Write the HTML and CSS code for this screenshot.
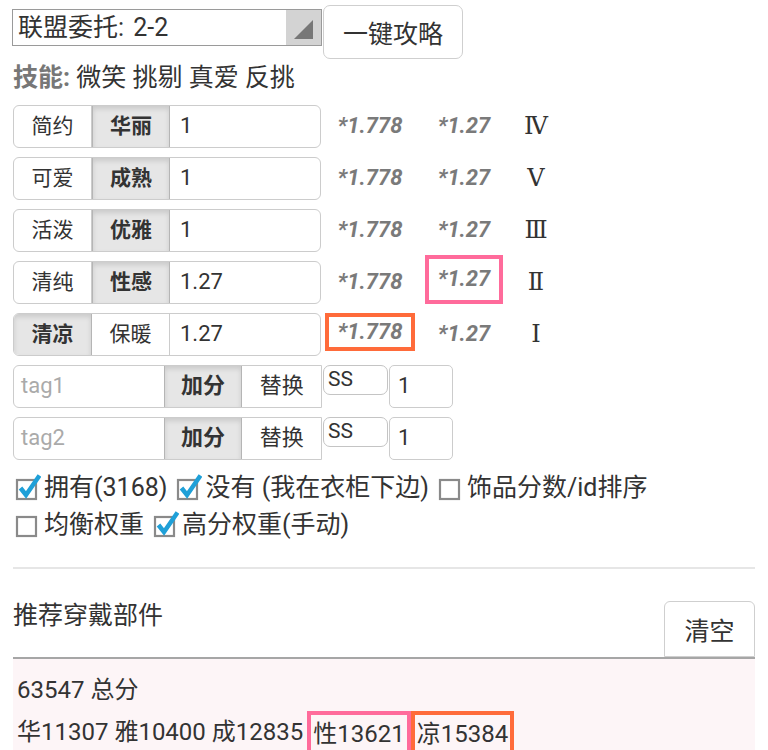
FILE: index.html
```html
<!DOCTYPE html>
<html lang="zh">
<head>
<meta charset="utf-8">
<title>联盟委托</title>
<link rel="stylesheet" href="styles.css">
</head>
<body>
<div class="page">
  <div class="top">
    <div class="select">
      <span class="select-text">联盟委托: 2-2</span>
      <span class="select-arrow"><svg width="20" height="20" viewBox="0 0 20 20"><polygon points="19,0 19,19 0,19" fill="#777"/></svg></span>
    </div>
    <button class="btn btn-big">一键攻略</button>
  </div>
  <div class="skills"><b>技能:</b> 微笑 挑剔 真爱 反挑</div>

  <div class="row">
    <div class="group"><span class="seg">简约</span><span class="seg active">华丽</span><span class="inp">1</span></div>
    <span class="mult m1">*1.778</span><span class="mult m2">*1.27</span><span class="roman">Ⅳ</span>
  </div>
  <div class="row">
    <div class="group"><span class="seg">可爱</span><span class="seg active">成熟</span><span class="inp">1</span></div>
    <span class="mult m1">*1.778</span><span class="mult m2">*1.27</span><span class="roman">Ⅴ</span>
  </div>
  <div class="row">
    <div class="group"><span class="seg">活泼</span><span class="seg active">优雅</span><span class="inp">1</span></div>
    <span class="mult m1">*1.778</span><span class="mult m2">*1.27</span><span class="roman">Ⅲ</span>
  </div>
  <div class="row">
    <div class="group"><span class="seg">清纯</span><span class="seg active">性感</span><span class="inp">1.27</span></div>
    <span class="mult m1">*1.778</span><span class="mult m2 hl-pink">*1.27</span><span class="roman">Ⅱ</span>
  </div>
  <div class="row">
    <div class="group"><span class="seg active">清凉</span><span class="seg">保暖</span><span class="inp">1.27</span></div>
    <span class="mult m1 hl-orange">*1.778</span><span class="mult m2">*1.27</span><span class="roman">Ⅰ</span>
  </div>

  <div class="row">
    <div class="tgroup"><span class="tinp">tag1</span><span class="tseg active">加分</span><span class="tseg">替换</span></div>
    <span class="ss">SS</span><span class="num">1</span>
  </div>
  <div class="row">
    <div class="tgroup"><span class="tinp">tag2</span><span class="tseg active">加分</span><span class="tseg">替换</span></div>
    <span class="ss">SS</span><span class="num">1</span>
  </div>

  <div class="checks">
    <div class="cline">
      <span class="cb"><svg width="26" height="30" viewBox="0 0 26 30"><rect x="2" y="9" width="19" height="19" fill="#fff" stroke="#8a8a8a" stroke-width="2.2"/><path d="M5.5 17 L11 24 L24.5 4.5" fill="none" stroke="#1fa0d8" stroke-width="4.5"/></svg></span><span class="ct">拥有(3168)</span>
      <span class="cb"><svg width="26" height="30" viewBox="0 0 26 30"><rect x="2" y="9" width="19" height="19" fill="#fff" stroke="#8a8a8a" stroke-width="2.2"/><path d="M5.5 17 L11 24 L24.5 4.5" fill="none" stroke="#1fa0d8" stroke-width="4.5"/></svg></span><span class="ct">没有 (我在衣柜下边)</span>
      <span class="cb"><svg width="26" height="30" viewBox="0 0 26 30"><rect x="2" y="9" width="19" height="19" fill="#fff" stroke="#8a8a8a" stroke-width="2.2"/></svg></span><span class="ct">饰品分数/id排序</span>
    </div>
    <div class="cline">
      <span class="cb"><svg width="26" height="30" viewBox="0 0 26 30"><rect x="2" y="9" width="19" height="19" fill="#fff" stroke="#8a8a8a" stroke-width="2.2"/></svg></span><span class="ct">均衡权重</span>
      <span class="cb"><svg width="26" height="30" viewBox="0 0 26 30"><rect x="2" y="9" width="19" height="19" fill="#fff" stroke="#8a8a8a" stroke-width="2.2"/><path d="M5.5 17 L11 24 L24.5 4.5" fill="none" stroke="#1fa0d8" stroke-width="4.5"/></svg></span><span class="ct">高分权重(手动)</span>
    </div>
  </div>

  <div class="sep"></div>

  <div class="header">
    <span class="htitle">推荐穿戴部件</span>
    <button class="btn btn-clear">清空</button>
  </div>
  <div class="results">
    <div class="rline">63547 总分</div>
    <div class="rline r2">华11307 雅10400 成12835<span class="box pink">性13621</span><span class="box orange">凉15384</span></div>
  </div>
</div>
</body>
</html>
```

FILE: styles.css
```css
* { box-sizing: border-box; }
body {
  margin: 0;
  background: #fff;
  color: #333;
  font-family: Roboto, "Noto Sans CJK SC", sans-serif;
  font-size: 25px;
  line-height: 1.2;
}
.page { padding: 5px 13px 0 13px; }

.top { display: flex; align-items: flex-start; }
.select {
  display: flex;
  width: 310px;
  height: 37px;
  margin-top: 4px;
  margin-left: -1px;
  border: 1px solid #9a9a9a;
}
.select-text { flex: 1; padding-left: 5px; line-height: 35px; font-size: 25px; word-spacing: 3px; }
.select-arrow {
  width: 35px;
  background: #d3d3d3;
  display: flex;
  align-items: flex-end;
  justify-content: flex-end;
  padding: 0 7px 5px 0;
}
.btn {
  font-family: inherit;
  color: #333;
  background: #fff;
  border: 1px solid #cfcfcf;
  border-radius: 7px;
  padding: 0;
}
.btn-big { width: 140px; height: 54px; margin-left: 1px; font-size: 25px; }

.skills { height: 46px; line-height: 38px; font-size: 25px; }
.skills b { color: #777; }

.row { display: flex; align-items: center; height: 43px; margin-bottom: 9px; }
.group {
  display: flex;
  width: 308px;
  height: 43px;
  border: 1px solid #ccc;
  border-radius: 6px;
  overflow: hidden;
}
.seg {
  width: 78px;
  display: flex;
  align-items: center;
  justify-content: center;
  font-size: 21px;
  border-right: 1px solid #ccc;
}
.seg.active, .tseg.active {
  background: #e6e6e6;
  font-weight: bold;
  border-left: 1px solid #b5b5b5;
  border-right: 1px solid #b5b5b5;
  box-shadow: inset 0 3px 5px rgba(0, 0, 0, 0.12);
}
.group .seg.active:first-child { border-left: none; }
.inp { flex: 1; display: flex; align-items: center; padding-left: 10px; font-size: 22px; }

.mult {
  display: flex;
  align-items: center;
  justify-content: center;
  height: 43px;
  font-size: 22px;
  font-weight: bold;
  font-style: italic;
  color: #7a7a7a;
}
.m1 { width: 90px; margin-left: 4px; }
.m2 { width: 78px; margin-left: 10px; }
.hl-pink { border: 4px solid #ff6b9b; height: 49px; align-self: flex-end; }
.hl-orange { border: 4px solid #ff6b3a; height: 38px; align-self: flex-start; }
.roman {
  width: 66px;
  text-align: center;
  font-family: "DejaVu Serif", "Liberation Serif", serif;
  font-size: 24px;
  color: #333;
}

.tgroup {
  display: flex;
  width: 309px;
  height: 43px;
  border: 1px solid #ccc;
  border-radius: 6px 0 0 6px;
}
.tinp { width: 150px; display: flex; align-items: center; padding-left: 7px; color: #aaa; font-size: 22px; }
.tseg { width: 79px; display: flex; align-items: center; justify-content: center; font-size: 22px; }
.ss {
  align-self: flex-start;
  width: 65px;
  height: 30px;
  margin-left: 1px;
  border: 1px solid #c4c4c4;
  border-radius: 7px;
  padding-left: 4px;
  line-height: 26px;
  font-size: 21px;
}
.num {
  width: 64px;
  height: 43px;
  margin-left: 1px;
  border: 1px solid #ccc;
  border-radius: 5px;
  display: flex;
  align-items: center;
  padding-left: 8px;
  font-size: 22px;
}

.cline { display: flex; align-items: center; height: 37px; padding-left: 2px; }
.cb { display: flex; width: 26px; height: 30px; margin-right: 3px; margin-top: -4px; }
.ct { font-size: 25px; margin-right: 9px; line-height: 30px; }

.sep { height: 2px; background: #e6e6e6; margin-top: 24px; }

.header { display: flex; justify-content: space-between; align-items: flex-start; border-bottom: 2px solid #a6a6a6; }
.htitle { margin-top: 29px; line-height: 36px; font-size: 25px; }
.btn-clear { width: 91px; height: 56px; margin-top: 32px; font-size: 25px; border-radius: 6px 6px 0 0; }

.results { background: #fdf5f7; padding: 10px 4px 0 4px; }
.rline { height: 42px; line-height: 42px; font-size: 24px; }
.r2 { display: flex; align-items: center; white-space: pre; }
.box { display: flex; align-items: center; height: 46px; margin-top: 4px; padding: 0 2px; border: 4px solid; }
.box.pink { border-color: #ff6b9b; margin-left: 4px; }
.box.orange { border-color: #ff6b3a; }
```
